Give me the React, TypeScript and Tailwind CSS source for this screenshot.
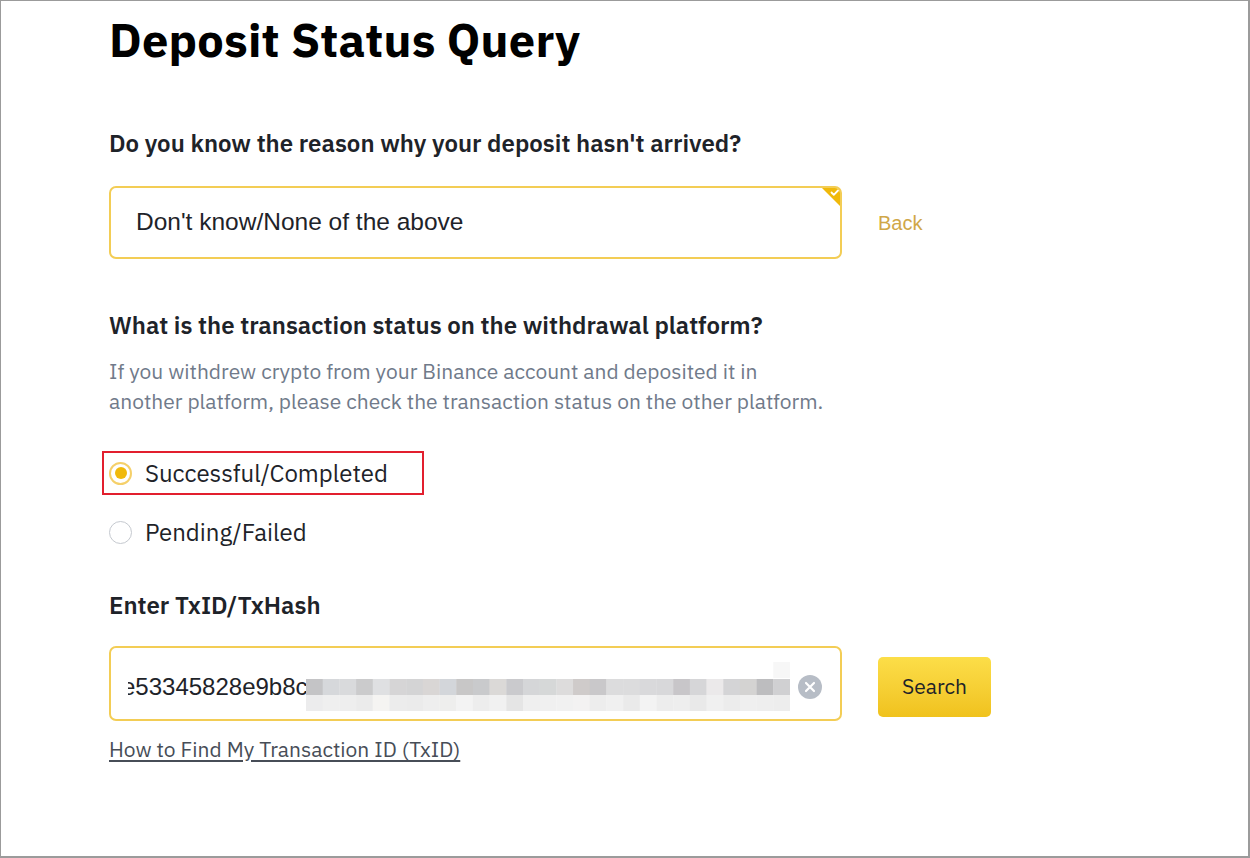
import React from 'react';

const FONT = "font-['IBM_Plex_Sans','Noto_Sans',Arial,sans-serif]";

// pixelated (blurred) part of the tx hash
const topRow = ['#c4c4c6', '#d6d8db', '#d9dadc', '#cbcbcc', '#dfe0e2', '#d6d5d6', '#d4d4d5', '#d9d6d5', '#d3d6da', '#c8c7c7', '#c9cacc', '#dbd9d7', '#cacacd', '#d5d6d8', '#d6d8d8', '#dddcdc', '#cfcbca', '#c9c8ca', '#dcdcdd', '#dcdcdd', '#d9d9db', '#d8d8da', '#c8c6c9', '#d6d6d8', '#ebe9ea', '#d4d4d6', '#d4d3d2', '#bdbdbf', '#d0d0d2'];
const botRow = ['#ececed', '#efefef', '#eeeeee', '#ebebeb', '#f5f4f2', '#ececec', '#ebebeb', '#eeeeee', '#eeeeed', '#f3f3f3', '#ededed', '#f1f1f1', '#e5e5e5', '#efefef', '#f0f0f0', '#f1f1f1', '#f3f2f2', '#ededed', '#f0f0f0', '#eaeaea', '#f3f3f3', '#ededed', '#eeeeee', '#e9e9e9', '#f0f0f0', '#ececec', '#efefef', '#eeeeee', '#ededed'];
const CELL = 484 / 29;

const Mosaic = () => (
  <svg width="484" height="52" viewBox="0 0 484 52" className="shrink-0 mt-[8px]">
    <rect x={CELL * 28} y="0" width={CELL} height="16" fill="#f7f7f7" />
    {topRow.map((c, i) => (
      <rect key={'t' + i} x={i * CELL} y="17" width={CELL + 0.3} height="16" fill={c} />
    ))}
    {botRow.map((c, i) => (
      <rect key={'b' + i} x={i * CELL} y="33" width={CELL + 0.3} height="16" fill={c} />
    ))}
  </svg>
);

const Radio = ({ checked }: { checked?: boolean }) =>
  checked ? (
    <div className="w-[23px] h-[23px] rounded-full border-2 border-[#f5d06a] flex items-center justify-center shrink-0">
      <div className="w-[12px] h-[12px] rounded-full bg-[#f0b90b]"></div>
    </div>
  ) : (
    <div className="w-[23px] h-[23px] rounded-full border-[1.5px] border-[#c5c9cf] shrink-0"></div>
  );

export default function App() {
  return (
    <div className={`w-[1250px] h-[858px] bg-white border-t border-l border-r-2 border-b-2 border-[#9b9b9b] ${FONT} text-[#1e2329]`}>
      <div className="pl-[108px] pt-[9px]">
        <h1 className="text-[47px] leading-[60px] font-bold tracking-[0.2px] text-black">Deposit Status Query</h1>

        <div className="mt-[58px] text-[24px] leading-[30px] font-semibold">Do you know the reason why your deposit hasn't arrived?</div>

        <div className="mt-[28px] flex items-center">
          <div className="relative w-[733px] h-[73px] rounded-[7px] border-2 border-[#f3cd55] flex items-center pl-[25px] overflow-hidden">
            <span className="font-['Liberation_Sans',Arial,sans-serif] text-[24.5px] text-[#1e2329]">Don't know/None of the above</span>
            <div className="absolute -top-[2px] -right-[2px] w-[22px] h-[22px] bg-[#f0b90b] [clip-path:polygon(0_0,100%_0,100%_100%)]">
              <svg width="22" height="22" viewBox="0 0 22 22" className="absolute top-0 left-0">
                <path d="M11.5 6.5 L13.8 8.8 L18 4.5" stroke="white" strokeWidth="1.8" fill="none" strokeLinecap="round" strokeLinejoin="round" />
              </svg>
            </div>
          </div>
          <span className="ml-[36px] font-['Liberation_Sans',Arial,sans-serif] text-[20px] text-[#d0a748]">Back</span>
        </div>

        <div className="mt-[51px] text-[24px] leading-[30px] font-semibold">What is the transaction status on the withdrawal platform?</div>
        <p className="mt-[16px] text-[21px] leading-[30px] text-[#707a8a]">
          If you withdrew crypto from your Binance account and deposited it in
          <br />
          another platform, please check the transaction status on the other platform.
        </p>

        <div className="mt-[35px] -ml-[7px] w-[322px] h-[44px] border-2 border-[#e21f2e] flex items-center pl-[5px]">
          <Radio checked />
          <span className="ml-[13px] text-[24px]">Successful/Completed</span>
        </div>
        <div className="mt-[22px] flex items-center h-[30px]">
          <Radio />
          <span className="ml-[13px] text-[24px]">Pending/Failed</span>
        </div>

        <div className="mt-[43px] text-[24px] leading-[30px] font-semibold">Enter TxID/TxHash</div>

        <div className="mt-[26px] flex items-center">
          <div className="w-[733px] h-[75px] rounded-[7px] border-2 border-[#f3cd55] flex items-center pl-[17px] overflow-hidden">
            <div className="w-[178px] overflow-hidden shrink-0 pt-[6px]">
              <span className="block -ml-[6px] font-['Liberation_Sans',Arial,sans-serif] text-[24px] text-[#1e2329] whitespace-nowrap">e53345828e9b8c</span>
            </div>
            <Mosaic />
            <svg width="24" height="24" viewBox="0 0 24 24" className="ml-[8px] mt-[6px] shrink-0">
              <circle cx="12" cy="12" r="12" fill="#b7bdc6" />
              <path d="M8 8 L16 16 M16 8 L8 16" stroke="white" strokeWidth="2.2" strokeLinecap="round" />
            </svg>
          </div>
          <button className="ml-[36px] mt-[6px] w-[113px] h-[60px] rounded-[5px] bg-gradient-to-b from-[#fcde48] to-[#f0c21c] text-[21px] text-[#1e2329]">Search</button>
        </div>

        <div className="mt-[15px] text-[21px] leading-[26px] text-[#474d57] underline underline-offset-[3px]">How to Find My Transaction ID (TxID)</div>
      </div>
    </div>
  );
}
